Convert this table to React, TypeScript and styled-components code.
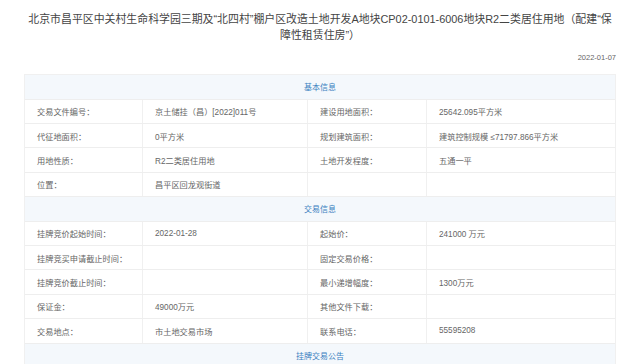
import styled, { createGlobalStyle } from "styled-components";

const GlobalStyle = createGlobalStyle`
  html, body {
    margin: 0;
    padding: 0;
    background: #ffffff;
  }
  body {
    font-family: "Liberation Sans", "Noto Sans CJK SC", sans-serif;
  }
`;

type Row = [string, string, string, string];

const basicRows: Row[] = [
  ["交易文件编号：", "京土储挂（昌）[2022]011号", "建设用地面积：", "25642.095平方米"],
  ["代征地面积：", "0平方米", "规划建筑面积：", "建筑控制规模 ≤71797.866平方米"],
  ["用地性质：", "R2二类居住用地", "土地开发程度：", "五通一平"],
  ["位置：", "昌平区回龙观街道", "", ""],
];

const tradeRows: Row[] = [
  ["挂牌竞价起始时间：", "2022-01-28", "起始价：", "241000 万元"],
  ["挂牌竞买申请截止时间：", "", "固定交易价格：", ""],
  ["挂牌竞价截止时间：", "", "最小递增幅度：", "1300万元"],
  ["保证金：", "49000万元", "其他文件下载：", ""],
  ["交易地点：", "市土地交易市场", "联系电话：", "55595208"],
];

const App = () => {
  return (
    <Page>
      <GlobalStyle />
      <Title>
        北京市昌平区中关村生命科学园三期及“北四村”棚户区改造土地开发A地块CP02-0101-6006地块R2二类居住用地（配建“保
        <br />
        障性租赁住房”）
      </Title>
      <DateLine>2022-01-07</DateLine>

      <Table>
        <SectionHeader>基本信息</SectionHeader>
        {basicRows.map((row, i) => (
          <DataRow key={"b" + i}>
            <Cell>{row[0]}</Cell>
            <Cell>{row[1]}</Cell>
            <Cell>{row[2]}</Cell>
            <Cell $last>{row[3]}</Cell>
          </DataRow>
        ))}

        <SectionHeader>交易信息</SectionHeader>
        {tradeRows.map((row, i) => (
          <DataRow key={"t" + i}>
            <Cell>{row[0]}</Cell>
            <Cell>{row[1]}</Cell>
            <Cell>{row[2]}</Cell>
            <Cell $last>{row[3]}</Cell>
          </DataRow>
        ))}

        <SectionHeader>挂牌交易公告</SectionHeader>
      </Table>
    </Page>
  );
};

export default App;

const Page = styled.div`
  width: 641px;
  height: 364px;
  overflow: hidden;
  padding: 11px 25px 0 24px;
  box-sizing: border-box;
`;

const Title = styled.h1`
  margin: 0;
  font-size: 10.9px;
  line-height: 16px;
  font-weight: normal;
  color: #444444;
  text-align: center;
  white-space: nowrap;
`;

const DateLine = styled.div`
  margin-top: 10px;
  font-size: 7.5px;
  line-height: 10px;
  color: #666666;
  text-align: right;
`;

const Table = styled.div`
  margin-top: 11px;
  border: 1px solid #f0f0f0;
  border-bottom: none;
  box-sizing: border-box;
`;

const SectionHeader = styled.div`
  height: 24.5px;
  display: flex;
  align-items: center;
  justify-content: center;
  background: #f4f8fc;
  border-bottom: 1px solid #eeeeee;
  box-sizing: border-box;
  font-size: 8px;
  color: #3a7fc0;
`;

const DataRow = styled.div`
  display: grid;
  grid-template-columns: 118px 165px 119px 1fr;
  height: 24.4px;
  border-bottom: 1px solid #eeeeee;
  box-sizing: border-box;
`;

const Cell = styled.div<{ $last?: boolean }>`
  display: flex;
  align-items: center;
  padding-left: 12px;
  border-right: ${(p) => (p.$last ? "none" : "1px solid #f0f0f0")};
  font-size: 8.2px;
  color: #666666;
  white-space: nowrap;
  overflow: hidden;
`;
